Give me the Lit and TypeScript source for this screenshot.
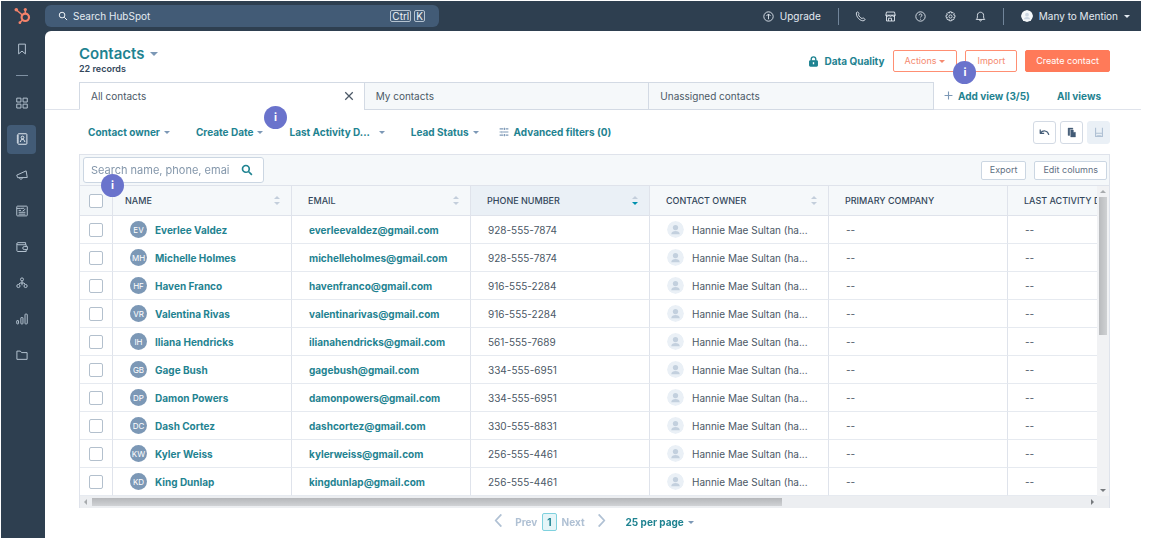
import { LitElement, html, svg, css, nothing } from "lit";
import { customElement, property } from "lit/decorators.js";

const icons: Record<string, unknown> = {
  search: svg`<circle cx="6.5" cy="6.5" r="4.5"/><path d="M10 10l4.5 4.5"/>`,
  bookmark: svg`<path d="M3.5 1.5h9v13L8 10.8l-4.5 3.7z"/>`,
  grid: svg`<rect x="1" y="1.5" width="5.6" height="5.2"/><rect x="9.4" y="1.5" width="5.6" height="5.2"/><rect x="1" y="9.5" width="5.6" height="5.2"/><rect x="9.4" y="9.5" width="5.6" height="5.2"/>`,
  contacts: svg`<rect x="2.5" y="1" width="12" height="14" rx="1"/><circle cx="8.7" cy="6" r="1.8"/><path d="M5.5 12l1.9-3.6h2.6L12 12M1 4h2.5M1 6.7h2.5M1 9.4h2.5M1 12h2.5"/>`,
  megaphone: svg`<path d="M1 8.2L13.5 2.5l1.5 8.8L2.2 11.6zM4.5 11.6c.3 2.6 3.7 2.8 4.2-.1"/>`,
  news: svg`<rect x="1" y="1.5" width="14" height="13" rx="1"/><path d="M1 4.5h5l5-.2M3.5 7.2h3.2M12.5 5.5L8.8 8.2M3.5 9.7h9M3.5 12.2h9"/>`,
  wallet: svg`<path d="M12.8 5V2.2H2.6a1.4 1.4 0 0 0 0 2.8h11v2.4M1.2 3.6v9.2c0 .8.5 1.2 1.2 1.2h11.2v-2.6"/><path d="M15.2 7.4H11a2 2 0 0 0 0 4h4.2z"/>`,
  flow: svg`<circle cx="8" cy="3.2" r="2"/><circle cx="3.2" cy="12" r="2.1"/><circle cx="12.8" cy="12" r="2.1"/><path d="M8 5.2v3M3.8 9.8L5.2 8h5.6l1.4 1.8M8 8v3"/>`,
  chart: svg`<rect x="1" y="10" width="2.4" height="4.5" rx=".6"/><rect x="6.500" y="6" width="2.8" height="8.5" rx=".6"/><rect x="12" y="1.5" width="3" height="13" rx=".6"/>`,
  folder: svg`<path d="M1.2 2.8h4.6l1.6 2h7.4v9H1.2z"/>`,
  up: svg`<circle cx="8" cy="8" r="6.8"/><path d="M8 12V4.5M5 7.3l3-3 3 3"/>`,
  phone: svg`<path d="M2.2 2.2c1-1.2 1.8-1.2 2.5-.2l1 1.6c.4.7 0 1.2-.8 1.9 1 2.3 2.9 4.3 5.4 5.6.8-.9 1.4-1.2 2-.8l1.7 1.1c1 .8.6 1.6-.6 2.5C8.2 16 .5 8 2.2 2.2z"/>`,
  shop: svg`<path d="M2.2 1.5h11.6l1 4.6H1.2zM2.2 6.2v8.3h11.6V6.2M1.2 6.1c.3 2.4 4.2 2.4 4.5 0 .3 2.4 4.3 2.4 4.6 0 .3 2.4 4.2 2.4 4.5 0M5 14.5v-4h4.5v4"/>`,
  help: svg`<circle cx="8" cy="8" r="6.8"/><path d="M5.9 6.3c.2-2.8 4.2-2.6 4.2-.2 0 1.6-2 1.7-2 3.3M8 11.3v1.2"/>`,
  gear: svg`<circle cx="8" cy="8" r="2.3"/><path d="M6.7 1.2h2.6l.5 1.9 1.8-1 1.9 1.9-1 1.8 2 .5v2.8l-2 .5 1 1.8-1.9 1.9-1.8-1-.5 2H6.700l-.5-2-1.8 1-1.9-1.9 1-1.8-2-.5V6.3l2-.5-1-1.8 1.9-1.9 1.8 1z"/>`,
  bell: svg`<path d="M1.8 12.3h12.4c-1.2-1-1.7-2-1.7-3.6V6.3c0-6-9-6-9 0v2.4c0 1.6-.5 2.6-1.7 3.6zM6.5 12.8c.3 2.4 2.7 2.4 3 0"/>`,
  close: svg`<path d="M2 2l12 12M14 2L2 14"/>`,
  plus: svg`<path d="M8 1v14M1 8h14"/>`,
  sliders: svg`<path d="M1 3h6M10.5 3H15M1 8h2M6.5 8H15M1 13h6M10.5 13H15M8.7 1.2v3.6M4.7 6.2v3.6M8.7 11.2v3.6"/>`,
  undo: svg`<path d="M1.8 3.5v5.7h5.7M2 9c3.5-4.8 10.5-4.5 12.3 2.5"/>`,
  prev: svg`<path d="M11.5 0.5L4.5 8l7 7.5"/>`,
  next: svg`<path d="M4.5 0.5l7 7.5-7 7.5"/>`,
  lock: svg`<path d="M4.7 7V4.5a3.3 3.3 0 0 1 6.6 0V7"/><rect x="2.5" y="7" width="11" height="7.5" rx="1" fill="currentColor"/><path d="M8 9v3" stroke="#fff"/>`,
  copy: svg`<path d="M3 1.5h7v1.8H5.5v9H3z" fill="currentColor"/><path d="M6.8 4.5h4v3.2h3v6.8h-7z" fill="currentColor"/>`,
  save: svg`<path d="M2.500 1v14h11V1M2.500 10h11M5 14h6"/>`,
};

@customElement("ui-icon")
export class UiIcon extends LitElement {
  @property() name = "";
  @property({ type: Number }) size = 12;
  @property({ type: Number }) weight = 1.3;

  static styles = css`
    :host { display: inline-flex; flex: none; }
    svg { display: block; fill: none; stroke: currentColor; }
  `;

  render() {
    return html`<svg width=${this.size} height=${this.size} viewBox="0 0 16 16"
      stroke-width=${this.weight} stroke-linejoin="round" aria-hidden="true">${icons[this.name] ?? nothing}</svg>`;
  }
}

const people = [
  ["Everlee Valdez", "everleevaldez@gmail.com", "928-555-7874"],
  ["Michelle Holmes", "michelleholmes@gmail.com", "928-555-7874"],
  ["Haven Franco", "havenfranco@gmail.com", "916-555-2284"],
  ["Valentina Rivas", "valentinarivas@gmail.com", "916-555-2284"],
  ["Iliana Hendricks", "ilianahendricks@gmail.com", "561-555-7689"],
  ["Gage Bush", "gagebush@gmail.com", "334-555-6951"],
  ["Damon Powers", "damonpowers@gmail.com", "334-555-6951"],
  ["Dash Cortez", "dashcortez@gmail.com", "330-555-8831"],
  ["Kyler Weiss", "kylerweiss@gmail.com", "256-555-4461"],
  ["King Dunlap", "kingdunlap@gmail.com", "256-555-4461"],
];

const columns = [
  { label: "Name", sort: "both" },
  { label: "Email", sort: "both" },
  { label: "Phone number", sort: "down" },
  { label: "Contact owner", sort: "both" },
  { label: "Primary company", sort: "" },
  { label: "Last activity date", sort: "" },
];

const navItems = [
  ["grid", "Workspaces"], ["contacts", "CRM"], ["megaphone", "Marketing"], ["news", "Content"],
  ["wallet", "Commerce"], ["flow", "Automations"], ["chart", "Reporting"], ["folder", "Library"],
];

@customElement("app-root")
export class AppRoot extends LitElement {
  static styles = css`
    :host {
      display: block;
      font-family: Inter, "Open Sans", sans-serif;
      font-size: 10px;
      line-height: 16px;
      color: #4b5866;
      background: #fff;
    }
    * { box-sizing: border-box; }
    button, input { font: inherit; color: inherit; margin: 0; padding: 0; border: 0; background: none; }
    button { cursor: pointer; white-space: nowrap; }
    a { color: #1f8391; text-decoration: none; font-weight: 700; }

    .shell {
      display: grid;
      grid-template-columns: 44px minmax(0, 1fr);
      min-height: 100vh;
      padding: 1px 16px 0 1px;
    }
    .side { background: #2e3f50; color: #b6c4d2; padding-right: 3px; }
    .logo { display: flex; justify-content: center; align-items: center; height: 30px; padding-left: 2px; }
    .side-link { display: flex; align-items: center; justify-content: center; height: 36px; color: inherit; }
    .side-box { display: flex; align-items: center; justify-content: center; width: 29px; height: 29px; border-radius: 4px; }
    .side-box.on { background: #425b76; color: #e3eaf1; }
    .side-rule { width: 12px; height: 1px; margin: 8px auto 9px; background: #7f91a3; }
    .frame { background: #2e3f50; display: flex; flex-direction: column; min-width: 0; }

    .top { display: flex; align-items: center; height: 30px; color: #f0f4f8; }
    .global { display: flex; align-items: center; gap: 5px; flex: 0 1 394px; height: 22px; padding: 0 14px 0 13px; border-radius: 6px; background: #425b76; }
    .global input { flex: 1; min-width: 0; outline: 0; }
    .global input::placeholder { color: #e4ebf2; opacity: 1; }
    .keys { display: flex; gap: 3px; }
    kbd { font: inherit; line-height: 10px; border: 1px solid #b5c3d0; border-radius: 2px; padding: 0 1px; }
    .tools { display: flex; align-items: center; margin-left: auto; padding-right: 11px; }
    .tool { display: flex; align-items: center; justify-content: center; gap: 6px; min-width: 30px; color: #e3eaf1; }
    .vr { width: 1px; height: 17px; margin: 0 7px; background: #71859a; }
    .upgrade { margin-right: 10px; }
    .account { margin-left: 10px; }
    .face { display: block; flex: none; border-radius: 50%; }

    .main { flex: 1; background: #fff; border-top-left-radius: 6px; min-width: 0; }
    .head { display: flex; align-items: flex-start; padding: 14px 31px 0 34px; height: 51px; }
    h1 { margin: 0; font-size: 15px; line-height: 18px; }
    .title { display: flex; align-items: center; gap: 5px; font-weight: 600; color: #1f8391; }
    .count { font-size: 9px; line-height: 11px; font-weight: 600; color: #33475b; margin: 0; }
    .actions { display: flex; align-items: center; gap: 8px; margin-left: auto; padding-top: 5px; }
    .link { display: flex; align-items: center; gap: 5px; font-weight: 700; color: #1f8391; }
    .btn { height: 22px; font-size: 9px; border-radius: 2px; border: 1px solid #ff8f73; color: #f58a70; padding: 0 11px; background: #fff; display: flex; align-items: center; gap: 3px; }
    .btn.solid { background: #ff7a59; border-color: #ff7a59; color: #fff; padding: 0 10px; }
    .anchor { position: relative; }

    .caret { display: inline-block; border: 3px solid transparent; border-top-color: currentColor; border-bottom: 0; }
    .caret.big { border-width: 4px 4px 0; }
    .caret.soft { color: #7c98b6; }

    .tip {
      position: absolute; z-index: 2; width: 23px; height: 23px; border-radius: 50%;
      background: #6a73cc; color: #fff; font-size: 11px; font-weight: 700; text-align: center; line-height: 23px; padding: 0;
    }
    .tip-import { left: -12px; top: 11px; }
    .tip-date { left: 68px; top: -18px; }
    .tip-search { left: 21px; top: 19px; }

    .views { display: flex; padding: 0 31px 0 34px; height: 28px; border-bottom: 1px solid #dfe3eb; }
    .tabs { display: flex; flex: 1; min-width: 0; }
    .tab { flex: 1; display: flex; align-items: center; justify-content: space-between; height: 28px; padding: 0 10px 0 11px; border: 1px solid #d3dae4; border-right: 0; background: #f5f8fa; }
    .tab:last-child { border-right: 1px solid #d3dae4; }
    .tab.on { background: #fff; border-bottom-color: #fff; }
    .view-links { display: flex; align-items: center; justify-content: space-between; width: 176px; padding: 0 9px 0 10px; }
    .soft { color: #7c98b6; }

    .filters { display: flex; align-items: center; gap: 26px; padding: 0 31px 0 43px; height: 44px; }
    .filters .link { gap: 4px; }
    .filters .wide { gap: 9px; }
    .filters .advanced { gap: 5px; margin-left: -6px; }
    .edit { display: flex; gap: 4px; margin-left: auto; }
    .square { display: flex; align-items: center; justify-content: center; width: 23px; height: 23px; border: 1px solid #d3dae4; border-radius: 3px; color: #425b76; }
    .square:disabled { background: #eaf0f6; border-color: #eaf0f6; color: #b0c1d4; }

    .card { margin: 0 31px 0 34px; border: 1px solid #dfe3eb; border-bottom: 0; background: #f5f8fa; }
    .bar { position: relative; display: flex; align-items: center; gap: 8px; height: 30px; padding: 0 2px 0 3px; }
    .find { display: flex; align-items: center; width: 181px; height: 26px; padding: 0 10px 0 7px; border: 1px solid #cbd6e2; border-radius: 3px; background: #fff; color: #1f8391; gap: 11px; margin-right: auto; }
    .find input { flex: 1; min-width: 0; font-size: 11px; outline: 0; color: #33475b; }
    .find input::placeholder { color: #8497ab; opacity: 1; }
    .small { height: 19px; padding: 0 8px; font-size: 9px; line-height: 16px; border: 1px solid #cbd6e2; border-radius: 2px; background: #fff; color: #5f7083; }

    .grid { display: grid; grid-template-columns: minmax(0, 1fr) 12px; }
    .scroll { overflow: auto; scrollbar-width: none; border-top: 1px solid #dfe3eb; }
    table { border-collapse: separate; border-spacing: 0; table-layout: fixed; width: 1107px; background: #fff; }
    .c-check { width: 33px; }
    th, td { border-right: 1px solid #dfe3eb; border-bottom: 1px solid #e6eaf0; padding: 0 16px 0 17px; text-align: left; white-space: nowrap; overflow: hidden; }
    th { height: 30px; padding: 0 11px 0 16px; background: #f5f8fa; font-size: 9px; font-weight: 500; color: #33475b; text-transform: uppercase; border-bottom-color: #dfe3eb; }
    .pick + th { padding-left: 12px; }
    th.sorted { background: #eaf0f6; }
    td { height: 28px; }
    th.pick, td.pick { padding: 0 0 0 9px; }
    .th-in { display: flex; align-items: center; justify-content: space-between; }
    .sort { display: grid; gap: 3px; color: #c3cedb; }
    .sort i { border: 3px solid transparent; }
    .sort .asc { border-top: 0; border-bottom-color: currentColor; }
    .sort .desc { border-bottom: 0; border-top-color: currentColor; }
    .sort .hot { color: #0091ae; }
    input[type="checkbox"] { appearance: none; display: block; width: 14px; height: 14px; border: 1px solid #b3c0cd; border-radius: 2px; background: #fff; }
    .who, .owner { display: flex; align-items: center; gap: 8px; }
    .pill { flex: none; width: 17px; height: 17px; border-radius: 50%; background: #7c98b6; color: #fff; font-size: 8px; line-height: 18px; text-align: center; }

    .vbar { display: flex; flex-direction: column; align-items: center; background: #f1f2f4; border-top: 1px solid #dfe3eb; }
    .vbar .thumb { width: 8px; height: 138px; margin-bottom: auto; background: linear-gradient(90deg, #b9bbbe, #cfd1d3); }
    .hbar { display: flex; align-items: center; height: 12px; background: #eceef1; padding-right: 15px; }
    .hbar .thumb { width: 68%; height: 8px; margin-right: auto; background: linear-gradient(#b5b7ba, #d0d2d5); }
    .arrow { flex: none; border: 3px solid transparent; color: #8a8d91; }
    .arrow.u { margin: 4px 0; border-top: 0; border-bottom-color: #a8abae; }
    .arrow.d { margin: 0 0 4px; border-bottom: 0; border-top-color: #777a7e; }
    .arrow.l { margin: 0 5px 0 4px; border-left: 0; border-right-color: #a8abae; }
    .arrow.r { border-right: 0; border-left-color: #777a7e; }

    .pager { display: flex; align-items: center; justify-content: center; height: 28px; gap: 10px; font-weight: 700; color: #b0c1d4; }
    .pages { display: flex; align-items: center; gap: 5px; }
    .pager .page { padding: 0 4px; height: 18px; border: 1px solid #7fd1de; border-radius: 2px; background: #e5f5f8; color: #1f8391; }
    .pager .link { gap: 4px; margin-left: 8px; }
  `;

  private caret(kind = "soft") {
    return html`<span class="caret ${kind}"></span>`;
  }

  private face(size: number, bg: string, fg: string) {
    return html`<svg class="face" width=${size} height=${size} viewBox="0 0 18 18" aria-hidden="true">
      <circle cx="9" cy="9" r="9" fill=${bg}/><circle cx="9" cy="7" r="2.8" fill=${fg}/>
      <path d="M4.5 14c0-4.5 9-4.5 9 0z" fill=${fg}/></svg>`;
  }

  private sort(kind: string) {
    if (!kind) return nothing;
    return html`<span class="sort"><i class="asc"></i><i class="desc ${kind === "down" ? "hot" : ""}"></i></span>`;
  }

  private filter(label: string, extra = "") {
    return html`<button class="link ${extra}">${label} ${this.caret()}</button>`;
  }

  render() {
    return html`
      <div class="shell">
        <nav class="side" aria-label="Main">
          <div class="logo">
            <svg width="18" height="18" viewBox="0 0 18 18" fill="none" stroke="#f5836b" aria-label="HubSpot">
              <circle cx="11.3" cy="10.3" r="3.7" stroke-width="2.2"/>
              <path d="M11.3 6.5V2.8M8.3 8L2.5 3M8.5 13l-2.3 2.3" stroke-width="1.5"/>
              <g fill="#f5836b" stroke="none"><circle cx="11.3" cy="2.5" r="1.6"/><circle cx="2.3" cy="2.8" r="1.8"/><circle cx="5.9" cy="15.7" r="1.4"/></g>
            </svg>
          </div>
          <a class="side-link" href="#" aria-label="Bookmarks"><span class="side-box"><ui-icon name="bookmark"></ui-icon></span></a>
          <div class="side-rule"></div>
          ${navItems.map(([icon, label]) => html`
            <a class="side-link" href="#" aria-label=${label}>
              <span class="side-box ${icon === "contacts" ? "on" : ""}"><ui-icon name=${icon}></ui-icon></span>
            </a>`)}
        </nav>

        <div class="frame">
          <header class="top">
            <label class="global">
              <ui-icon name="search" size="10" weight="1.6"></ui-icon>
              <input type="search" placeholder="Search HubSpot" aria-label="Search HubSpot">
              <span class="keys"><kbd>Ctrl</kbd><kbd>K</kbd></span>
            </label>
            <div class="tools">
              <button class="tool upgrade"><ui-icon name="up" size="11"></ui-icon>Upgrade</button>
              <span class="vr"></span>
              ${[["phone", "Calling"], ["shop", "Marketplace"], ["help", "Help"], ["gear", "Settings"], ["bell", "Notifications"]].map(
                ([i, l]) => html`<button class="tool" aria-label=${l}><ui-icon name=${i} size="11"></ui-icon></button>`)}
              <span class="vr"></span>
              <button class="tool account">${this.face(12, "#f5f8fa", "#cbd6e2")}Many to Mention${this.caret("")}</button>
            </div>
          </header>

          <main class="main">
            <div class="head">
              <div>
                <h1><button class="title">Contacts ${this.caret("big soft")}</button></h1>
                <p class="count">22 records</p>
              </div>
              <div class="actions">
                <button class="link"><ui-icon name="lock" size="11" weight="2"></ui-icon>Data Quality</button>
                <button class="btn">Actions ${this.caret("")}</button>
                <div class="anchor">
                  <button class="btn">Import</button>
                  <button class="tip tip-import" aria-label="About import">i</button>
                </div>
                <button class="btn solid">Create contact</button>
              </div>
            </div>

            <div class="views">
              <div class="tabs">
                <button class="tab on">All contacts <ui-icon name="close" size="10" weight="2"></ui-icon></button>
                <button class="tab">My contacts</button>
                <button class="tab">Unassigned contacts</button>
              </div>
              <div class="view-links">
                <button class="link"><ui-icon class="soft" name="plus" size="9" weight="2"></ui-icon>Add view (3/5)</button>
                <a href="#">All views</a>
              </div>
            </div>

            <div class="filters">
              ${this.filter("Contact owner")}
              <div class="anchor">
                ${this.filter("Create Date")}
                <button class="tip tip-date" aria-label="About create date">i</button>
              </div>
              ${this.filter("Last Activity D...", "wide")}
              ${this.filter("Lead Status")}
              <button class="link advanced"><ui-icon class="soft" name="sliders" size="10" weight="1.7"></ui-icon>Advanced filters (0)</button>
              <div class="edit">
                <button class="square" aria-label="Undo"><ui-icon name="undo" size="11" weight="1.8"></ui-icon></button>
                <button class="square" aria-label="Copy"><ui-icon name="copy" size="11" weight="0.5"></ui-icon></button>
                <button class="square" aria-label="Save" disabled><ui-icon name="save" size="10" weight="1.8"></ui-icon></button>
              </div>
            </div>

            <section class="card">
              <div class="bar">
                <label class="find">
                  <input type="text" placeholder="Search name, phone, email addresses" aria-label="Search contacts">
                  <ui-icon name="search" size="12" weight="2.2"></ui-icon>
                </label>
                <button class="tip tip-search" aria-label="About search">i</button>
                <button class="small">Export</button>
                <button class="small">Edit columns</button>
              </div>
              <div class="grid">
                <div class="scroll">
                  <table>
                    <colgroup><col class="c-check">${columns.map(() => html`<col>`)}</colgroup>
                    <thead>
                      <tr>
                        <th class="pick"><input type="checkbox" aria-label="Select all"></th>
                        ${columns.map((c) => html`
                          <th class=${c.sort === "down" ? "sorted" : ""}><div class="th-in">${c.label}${this.sort(c.sort)}</div></th>`)}
                      </tr>
                    </thead>
                    <tbody>
                      ${people.map(([name, email, phone]) => html`
                        <tr>
                          <td class="pick"><input type="checkbox" aria-label="Select ${name}"></td>
                          <td><div class="who"><span class="pill">${name.split(" ").map((w) => w[0]).join("")}</span><a href="#">${name}</a></div></td>
                          <td><a href="mailto:${email}">${email}</a></td>
                          <td>${phone}</td>
                          <td><div class="owner">${this.face(17, "#eaf0f6", "#c3d0de")}Hannie Mae Sultan (ha...</div></td>
                          <td>--</td>
                          <td>--</td>
                        </tr>`)}
                    </tbody>
                  </table>
                </div>
                <div class="vbar"><span class="arrow u"></span><span class="thumb"></span><span class="arrow d"></span></div>
              </div>
              <div class="hbar"><span class="arrow l"></span><span class="thumb"></span><span class="arrow r"></span></div>
            </section>

            <div class="pager">
              <button aria-label="Previous page"><ui-icon name="prev" size="13" weight="2.2"></ui-icon></button>
              <div class="pages"><button>Prev</button><button class="page">1</button><button>Next</button></div>
              <button aria-label="Next page"><ui-icon name="next" size="13" weight="2.2"></ui-icon></button>
              <button class="link">25 per page ${this.caret()}</button>
            </div>
          </main>
        </div>
      </div>`;
  }
}
